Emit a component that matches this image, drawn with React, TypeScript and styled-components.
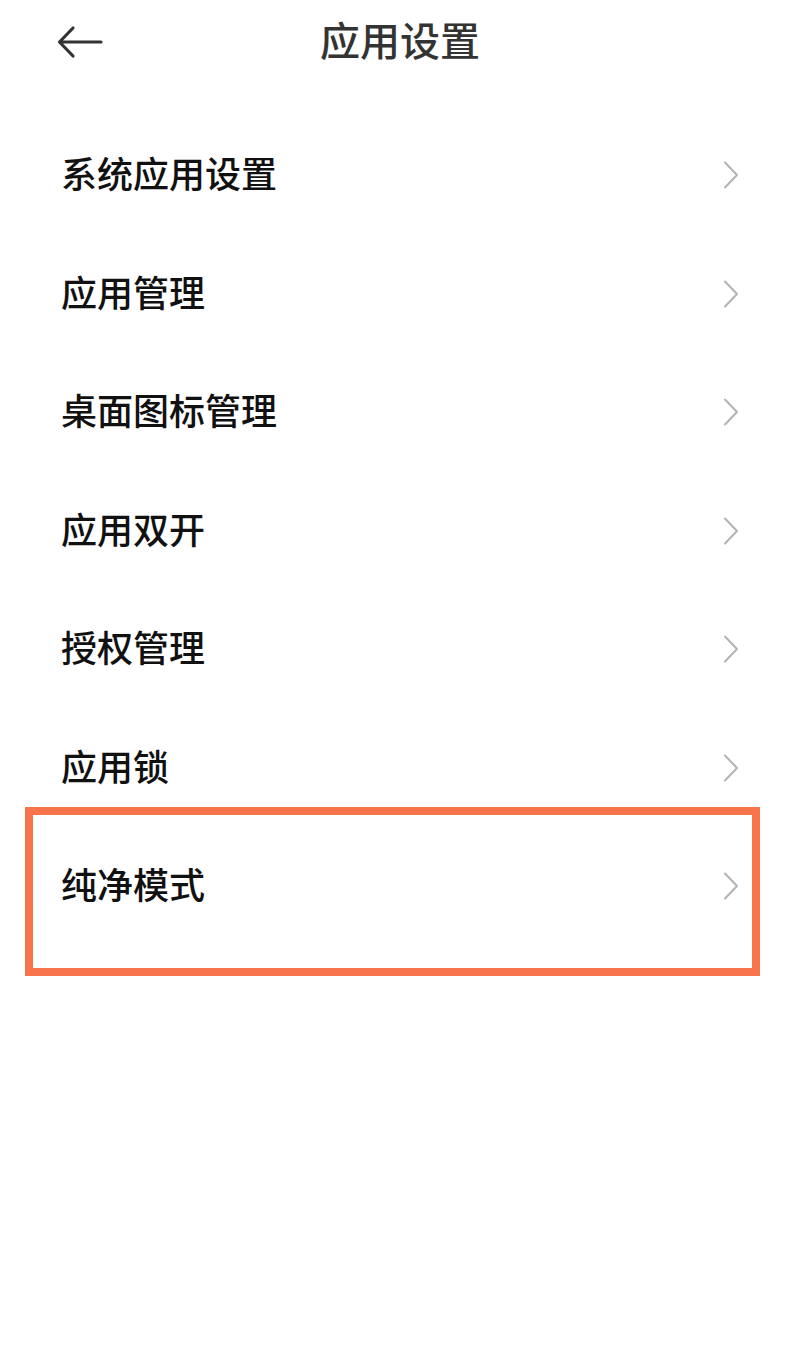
import React from "react";
import styled, { createGlobalStyle } from "styled-components";

const GlobalStyle = createGlobalStyle`
  html, body {
    margin: 0;
    padding: 0;
    background: #ffffff;
  }
  body {
    font-family: "Noto Sans CJK SC", "Noto Sans", sans-serif;
  }
`;

const Page = styled.div`
  width: 800px;
  height: 1354px;
  background: #ffffff;
  display: flex;
  flex-direction: column;
`;

const Header = styled.header`
  height: 84px;
  display: grid;
  grid-template-columns: 160px 1fr 160px;
  align-items: center;
`;

const BackButton = styled.button`
  border: none;
  background: transparent;
  padding: 0;
  margin-left: 57px;
  width: 46px;
  height: 34px;
  display: flex;
  align-items: center;
  color: #333333;
  cursor: pointer;
`;

const Title = styled.h1`
  margin: 0 0 6px;
  text-align: center;
  font-size: 40px;
  font-weight: 500;
  color: #333333;
  line-height: 1;
`;

const List = styled.ul`
  list-style: none;
  margin: 0;
  padding: 29px 0 0;
  display: flex;
  flex-direction: column;
`;

const Row = styled.li`
  position: relative;
  height: 118.5px;
  display: flex;
  align-items: center;
  justify-content: space-between;
  padding: 0 60px 0 61px;
`;

const Label = styled.span`
  font-size: 36px;
  font-weight: 500;
  color: #111111;
  line-height: 1;
`;

const Highlight = styled.div`
  position: absolute;
  left: 25px;
  right: 40px;
  top: -17px;
  bottom: -33px;
  border: 8px solid #f7734a;
  pointer-events: none;
`;

const Chevron = () => (
  <svg width="18" height="28" viewBox="0 0 18 28" fill="none" style={{ marginTop: 6 }}>
    <path d="M3 1.5 L15 14 L3 26.5" stroke="#b3b3b3" strokeWidth="2" strokeLinecap="round" strokeLinejoin="round" />
  </svg>
);

const BackArrow = () => (
  <svg width="46" height="34" viewBox="0 0 46 34" fill="none">
    <path d="M44 17 H3 M16 3 L2.5 17 L16 31" stroke="currentColor" strokeWidth="3.2" strokeLinecap="round" strokeLinejoin="round" />
  </svg>
);

const items = ["系统应用设置", "应用管理", "桌面图标管理", "应用双开", "授权管理", "应用锁", "纯净模式"];

export default function App() {
  return (
    <Page>
      <GlobalStyle />
      <Header>
        <BackButton aria-label="返回">
          <BackArrow />
        </BackButton>
        <Title>应用设置</Title>
        <div />
      </Header>
      <List>
        {items.map((label, i) => (
          <Row key={label}>
            <Label>{label}</Label>
            <Chevron />
            {i === items.length - 1 && <Highlight />}
          </Row>
        ))}
      </List>
    </Page>
  );
}
